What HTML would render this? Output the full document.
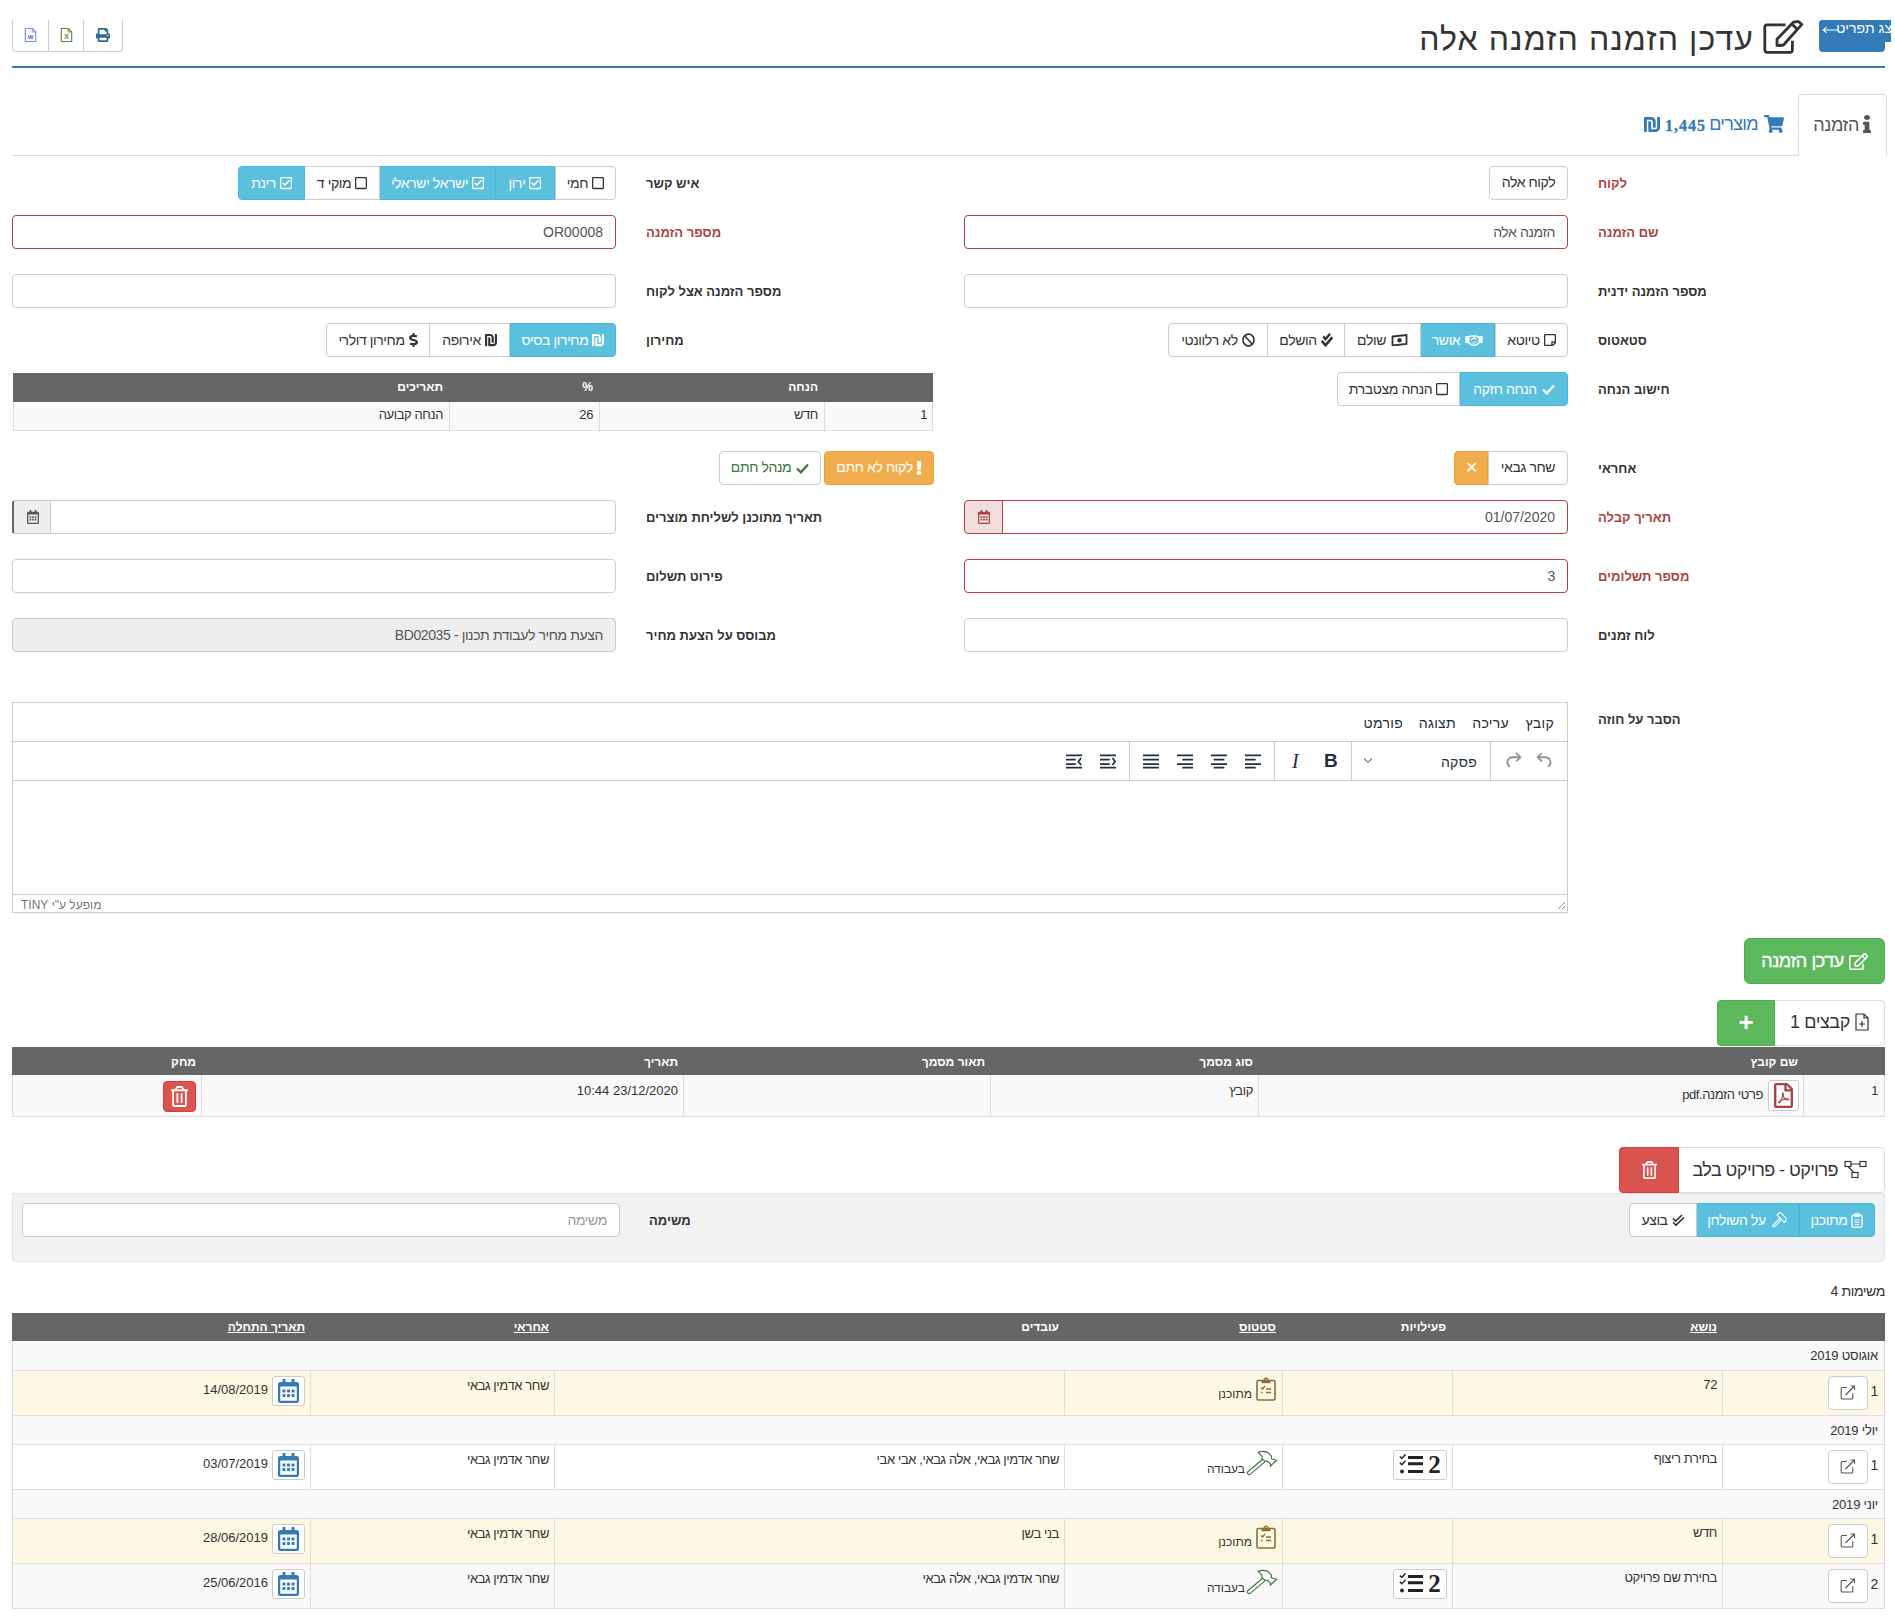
<!DOCTYPE html>
<html dir="rtl" lang="he">
<head>
<meta charset="utf-8">
<style>
*{box-sizing:border-box}
html,body{margin:0;padding:0;background:#fff}
body{width:1895px;height:1622px;overflow:hidden;position:relative;font-family:"Liberation Sans",sans-serif;font-size:14px;color:#333;line-height:1.42857;letter-spacing:-.4px}
.lt{letter-spacing:0}
.a{position:absolute}
.lbl{position:absolute;font-weight:bold;color:#333;text-align:left;white-space:nowrap;font-size:13px;line-height:18px;letter-spacing:0}
.err{color:#a94442}
.inp{position:absolute;height:34px;border:1px solid #ccc;border-radius:4px;background:#fff;color:#555;padding:2px 12px 0;display:flex;align-items:center;white-space:nowrap}
.inp.e{border-color:#a94442}
.inp.dis{background:#eee}
.grp{position:absolute;display:flex;height:34px}
.grp>div{height:100%;border:1px solid #ccc;background:#fff;color:#333;display:flex;align-items:center;justify-content:center;white-space:nowrap;margin-left:-1px;padding-top:2px}
.grp>div svg{margin-top:-2px}
.grp>div:first-child{border-radius:0 4px 4px 0;margin-left:0}
.grp>div:last-child{border-radius:4px 0 0 4px}
.grp>div.on{background:#5bc0de;border-color:#46b8da;color:#fff}
.grp svg{margin-left:4px;flex:none}
svg{display:block}
.th{color:#fff;font-weight:bold;white-space:nowrap;font-size:12px;line-height:18px;letter-spacing:0}
.td{color:#333;white-space:nowrap;font-size:13px}
.mnu{color:#222f3e;font-size:14px;white-space:nowrap;line-height:20px;letter-spacing:.3px}
</style>
</head>
<body>
<!-- HEADER -->
<div class="a" style="left:1819px;top:20px;width:72px;height:32px;overflow:hidden">
  <div class="a" style="left:0;top:0;width:66px;height:32px;background:#337ab7;border-radius:4px"></div>
  <div class="a" style="left:0;top:0;width:72px;height:22px;background:#337ab7;border-radius:4px 0 0 0"></div>
  <div class="a" style="right:-10px;top:-2px;color:#fff;font-size:14px;white-space:nowrap;line-height:20px;letter-spacing:0">הצג תפריט</div><svg class="a" style="left:3px;top:6px" width="16" height="8" viewBox="0 0 16 8"><path d="M16 4H1.5M4.5 1.2L1.3 4l3.2 2.8" fill="none" stroke="#fff" stroke-width="1.1"/></svg>
</div>
<svg class="a" style="left:1755px;top:15px" width="55" height="45" viewBox="0 0 55 45"><path d="M30.5 9.8H12.2a2.4 2.4 0 0 0-2.4 2.4V35a2.4 2.4 0 0 0 2.4 2.4H35a2.4 2.4 0 0 0 2.4-2.4V25.8" fill="none" stroke="#333" stroke-width="2.8"/><path d="M22 30.5V24.3L38.3 7.3Q39.5 6.6 43.8 6.7L46.7 9.6L28.4 30Q25 30.6 22 30.5Z" fill="none" stroke="#333" stroke-width="2.8" stroke-linejoin="round"/><path d="M37.4 9.6L42.6 14.8" stroke="#333" stroke-width="2.8"/></svg>
<div class="a" style="right:141px;top:23px;font-size:32px;line-height:32px;color:#333;white-space:nowrap;letter-spacing:1.1px">עדכן הזמנה הזמנה אלה</div>
<div class="a" style="left:12px;top:20px;width:111px;height:32px;border:1px solid #ccc;border-top:none;border-radius:0 0 4px 4px"></div>
<div class="a" style="left:48px;top:20px;width:1px;height:31px;background:#ccc"></div>
<div class="a" style="left:83px;top:20px;width:1px;height:31px;background:#ccc"></div>
<div class="a" style="left:24px;top:27px"><svg width="13" height="16" viewBox="0 0 15 18"><path d="M1.5 1.5h8l4 4v11h-12z" fill="none" stroke="#7b8cd6" stroke-width="1.3" stroke-linejoin="round"/><path d="M9.5 1.5v4h4" fill="none" stroke="#7b8cd6" stroke-width="1.1"/><text x="7.5" y="14" font-size="7" font-family="Liberation Sans" font-weight="bold" text-anchor="middle" fill="#4a60b5">W</text></svg></div>
<div class="a" style="left:60px;top:27px"><svg width="13" height="16" viewBox="0 0 15 18"><path d="M1.5 1.5h8l4 4v11h-12z" fill="none" stroke="#5a8a3c" stroke-width="1.3" stroke-linejoin="round"/><path d="M9.5 1.5v4h4" fill="none" stroke="#5a8a3c" stroke-width="1.1"/><text x="7.5" y="14" font-size="8" font-family="Liberation Sans" font-weight="bold" text-anchor="middle" fill="#5a8a3c">X</text></svg></div>
<div class="a" style="left:96px;top:28px"><svg width="14" height="14" viewBox="0 0 512 512" preserveAspectRatio="none" style=""><path d="M448 192V77.25c0-8.49-3.37-16.62-9.37-22.63L393.37 9.37c-6-6-14.14-9.37-22.63-9.370H96C78.33 0 64 14.33 64 32v160c-35.35 0-64 28.65-64 64v112c0 8.84 7.16 16 16 16h48v96c0 17.67 14.33 32 32 32h320c17.67 0 32-14.33 32-32v-96h48c8.84 0 16-7.16 16-16V256c0-35.35-28.65-64-64-64zm-64 256H128v-96h256v96zm0-224H128V64h192v48c0 8.84 7.16 16 16 16h48v96zm48 72c-13.25 0-24-10.75-24-24 0-13.26 10.75-24 24-24s24 10.740 24 24c0 13.25-10.75 24-24 24z" fill="#2e6a96"/></svg></div>
<div class="a" style="left:12px;top:66px;width:1873px;height:2px;background:#337ab7"></div>

<!-- TABS -->
<div class="a" style="left:12px;top:155px;width:1786px;height:1px;background:#ddd"></div>
<div class="a" style="left:1798px;top:94px;width:89px;height:62px;border:1px solid #ddd;border-bottom:none;border-radius:4px 4px 0 0;background:#fff"></div>
<div class="a" style="right:36px;top:116px;font-size:18px;line-height:18px;white-space:nowrap;color:#555">הזמנה</div>
<div class="a" style="left:1863px;top:115px"><svg width="8" height="18" viewBox="0 0 192 512" preserveAspectRatio="none" style=""><path d="M20 424.229h20V279.771H20c-11.046 0-20-8.954-20-20V212c0-11.046 8.954-20 20-20h112c11.046 0 20 8.954 20 20v212.229h20c11.046 0 20 8.954 20 20V492c0 11.046-8.954 20-20 20H20c-11.046 0-20-8.954-20-20v-47.771c0-11.046 8.954-20 20-20zM96 0C56.235 0 24 32.235 24 72s32.235 72 72 72 72-32.235 72-72S135.764 0 96 0z" fill="#555"/></svg></div>
<!-- TAB 2 -->
<div class="a" style="left:1764px;top:115px"><svg width="20" height="18" viewBox="0 0 576 512" preserveAspectRatio="none" style=""><path d="M528.12 301.319l47.273-208C578.806 78.301 567.391 64 551.99 64H159.208l-9.166-44.81C147.758 8.021 137.930 0 126.529 0H24C10.745 0 0 10.745 0 24v16c0 13.255 10.745 24 24 24h69.883l70.248 343.435C147.325 417.1 136 435.222 136 456c0 30.928 25.072 56 56 56s56-25.072 56-56c0-15.674-6.447-29.835-16.824-40h209.647C430.447 426.165 424 440.326 424 456c0 30.928 25.072 56 56 56s56-25.072 56-56c0-22.172-12.888-41.332-31.579-50.405l5.517-24.276c3.413-15.018-8.002-29.319-23.403-29.319H218.117l-6.545-32h293.145c11.206 0 20.920-7.754 23.403-18.681z" fill="#337ab7"/></svg></div>
<div class="a" style="right:137px;top:115px;font-size:18px;line-height:18px;white-space:nowrap;color:#337ab7;letter-spacing:-.7px">מוצרים</div>
<div class="a" style="left:1665px;top:118px;font-size:16px;line-height:16px;white-space:nowrap;color:#337ab7;font-family:'Liberation Serif';font-weight:bold;direction:ltr;letter-spacing:1px;-webkit-text-stroke:.3px #337ab7">1,445</div>
<div class="a" style="left:1644px;top:116px"><svg width="16" height="17" viewBox="0 0 448 512" preserveAspectRatio="none" style=""><path d="M248 168v168c0 8.84 7.16 16 16 16h48c8.84 0 16-7.16 16-16V168c0-75.11-60.89-136-136-136H24C10.75 32 0 42.74 0 56v408c0 8.84 7.16 16 16 16h48c8.84 0 16-7.16 16-16V112h112c30.93 0 56 25.07 56 56zM432 32h-48c-8.84 0-16 7.16-16 16v296c0 30.93-25.07 56-56 56H200V176c0-8.84-7.16-16-16-16h-48c-8.84 0-16 7.16-16 16v280c0 13.25 10.75 24 24 24h168c75.11 0 136-60.89 136-136V48c0-8.84-7.16-16-16-16z" fill="#337ab7"/></svg></div>

<!-- FORM ROW 1 -->
<div class="lbl err" style="left:1598px;top:175px">לקוח</div>
<div class="inp" style="left:1489px;top:166px;width:79px;color:#333;justify-content:center;padding:0">לקוח אלה</div>
<div class="lbl" style="left:646px;top:175px">איש קשר</div>
<div class="grp" style="left:237px;top:166px;width:379px">
 <div style="width:61px"><svg width="12" height="14" viewBox="0 0 448 512" preserveAspectRatio="none" style=""><path d="M400 32H48C21.5 32 0 53.5 0 80v352c0 26.5 21.5 48 48 48h352c26.5 0 48-21.5 48-48V80c0-26.5-21.5-48-48-48zm-6 400H54c-3.3 0-6-2.7-6-6V86c0-3.3 2.7-6 6-6h340c3.3 0 6 2.7 6 6v340c0 3.3-2.7 6-6 6z" fill="#333"/></svg>חמי</div>
 <div class="on" style="width:60px"><svg width="12" height="14" viewBox="0 0 448 512" preserveAspectRatio="none" style=""><path d="M400 32H48C21.49 32 0 53.49 0 80v352c0 26.51 21.49 48 48 48h352c26.51 0 48-21.49 48-48V80c0-26.51-21.49-48-48-48zm0 400H48V80h352v352zm-35.864-241.724L191.547 361.48c-4.705 4.667-12.303 4.637-16.970-.068l-90.781-91.516c-4.667-4.705-4.637-12.303.068-16.971l22.719-22.536c4.705-4.667 12.303-4.637 16.970.069l59.792 60.277 141.352-140.216c4.705-4.667 12.303-4.637 16.970.068l22.536 22.718c4.667 4.706 4.637 12.304-.068 16.971z" fill="#fff"/></svg>ירון</div>
 <div class="on" style="width:117px"><svg width="12" height="14" viewBox="0 0 448 512" preserveAspectRatio="none" style=""><path d="M400 32H48C21.49 32 0 53.49 0 80v352c0 26.51 21.49 48 48 48h352c26.51 0 48-21.49 48-48V80c0-26.51-21.49-48-48-48zm0 400H48V80h352v352zm-35.864-241.724L191.547 361.48c-4.705 4.667-12.303 4.637-16.970-.068l-90.781-91.516c-4.667-4.705-4.637-12.303.068-16.971l22.719-22.536c4.705-4.667 12.303-4.637 16.970.069l59.792 60.277 141.352-140.216c4.705-4.667 12.303-4.637 16.970.068l22.536 22.718c4.667 4.706 4.637 12.304-.068 16.971z" fill="#fff"/></svg>ישראל ישראלי</div>
 <div style="width:76px"><svg width="12" height="14" viewBox="0 0 448 512" preserveAspectRatio="none" style=""><path d="M400 32H48C21.5 32 0 53.5 0 80v352c0 26.5 21.5 48 48 48h352c26.5 0 48-21.5 48-48V80c0-26.5-21.5-48-48-48zm-6 400H54c-3.3 0-6-2.7-6-6V86c0-3.3 2.7-6 6-6h340c3.3 0 6 2.7 6 6v340c0 3.3-2.7 6-6 6z" fill="#333"/></svg>מוקי ד</div>
 <div class="on" style="width:67px"><svg width="12" height="14" viewBox="0 0 448 512" preserveAspectRatio="none" style=""><path d="M400 32H48C21.49 32 0 53.49 0 80v352c0 26.51 21.49 48 48 48h352c26.51 0 48-21.49 48-48V80c0-26.51-21.49-48-48-48zm0 400H48V80h352v352zm-35.864-241.724L191.547 361.48c-4.705 4.667-12.303 4.637-16.970-.068l-90.781-91.516c-4.667-4.705-4.637-12.303.068-16.971l22.719-22.536c4.705-4.667 12.303-4.637 16.970.069l59.792 60.277 141.352-140.216c4.705-4.667 12.303-4.637 16.970.068l22.536 22.718c4.667 4.706 4.637 12.304-.068 16.971z" fill="#fff"/></svg>רינת</div>
</div>

<!-- ROW 2 -->
<div class="lbl err" style="left:1598px;top:224px">שם הזמנה</div>
<div class="inp e" style="left:964px;top:215px;width:604px">הזמנה אלה</div>
<div class="lbl err" style="left:646px;top:224px">מספר הזמנה</div>
<div class="inp e lt" style="left:12px;top:215px;width:604px">OR00008</div>

<!-- ROW 3 -->
<div class="lbl" style="left:1598px;top:283px">מספר הזמנה ידנית</div>
<div class="inp" style="left:964px;top:274px;width:604px"></div>
<div class="lbl" style="left:646px;top:283px">מספר הזמנה אצל לקוח</div>
<div class="inp" style="left:12px;top:274px;width:604px"></div>

<!-- ROW 4 -->
<div class="lbl" style="left:1598px;top:332px">סטאטוס</div>
<div class="grp" style="left:1169px;top:323px;width:399px">
 <div style="width:73px"><svg width="12" height="14" viewBox="0 0 448 512" preserveAspectRatio="none" style=""><path d="M448 348.106V80c0-26.51-21.49-48-48-48H48C21.490 32 0 53.490 0 80v351.988c0 26.51 21.49 48 48 48h268.118a48 48 0 0 0 33.941-14.059l83.882-83.882A48 48 0 0 0 448 348.106zm-128 80v-76.118h76.118L320 428.106zM400 80v223.988H296c-13.255 0-24 10.745-24 24v104H48V80h352z" fill="#333"/></svg>טיוטא</div>
 <div class="on" style="width:75px"><svg width="18" height="11" viewBox="0 0 18 11" style="margin-left:5px"><path d="M0.3 1h3.4v7H0.3zM14.3 1h3.4v7h-3.4z" fill="#fff"/><path d="M3.7 1.8L6.8 1h3.4l4.1 1.2V7.6l-3.8 2.8H7.4L3.7 7.6z" fill="none" stroke="#fff" stroke-width="1.6" stroke-linejoin="round"/><path d="M6 5l3-2.2 2.3 1.6M7.5 7.5l1.5 1.2M9.5 6.5l1.3 1" fill="none" stroke="#fff" stroke-width="1.2"/></svg>אושר</div>
 <div style="width:77px"><svg width="17" height="12" viewBox="0 0 17 12" style="margin-left:5px"><path d="M1.5 2.5L15.5 1v9L1.5 11.5z" fill="none" stroke="#333" stroke-width="1.8"/><circle cx="8.5" cy="6.2" r="2.2" fill="#333"/></svg>שולם</div>
 <div style="width:78px"><svg width="12" height="14" viewBox="0 0 512 512" preserveAspectRatio="none" style=""><path d="M505 174.8l-39.6-39.6c-9.4-9.4-24.6-9.4-33.9 0L192 374.7 80.6 263.2c-9.4-9.4-24.6-9.4-33.9 0L7 302.9c-9.4 9.4-9.4 24.6 0 34L175 505c9.4 9.4 24.6 9.4 33.9 0l296-296.2c9.4-9.5 9.4-24.7.1-34zm-324.3 106c6.2 6.3 16.4 6.3 22.6 0l208-208.2c6.2-6.3 6.2-16.4 0-22.6L366.1 4.7c-6.2-6.3-16.4-6.3-22.6 0L192 156.2l-55.4-55.5c-6.2-6.3-16.4-6.3-22.6 0L68.7 146c-6.2 6.3-6.2 16.4 0 22.6l112 112.2z" fill="#333"/></svg>הושלם</div>
 <div style="width:100px"><svg width="13" height="14" viewBox="0 0 512 512" preserveAspectRatio="none" style=""><path d="M256 8C119.034 8 8 119.033 8 256s111.034 248 248 248 248-111.034 248-248S392.967 8 256 8zm130.108 117.892c65.448 65.448 70 165.481 20.677 235.637L150.47 105.216c70.204-49.356 170.226-44.735 235.638 20.676zM125.892 386.108c-65.448-65.448-70-165.481-20.677-235.637L361.53 406.784c-70.203 49.356-170.226 44.736-235.638-20.676z" fill="#333"/></svg>לא רלוונטי</div>
</div>
<div class="lbl" style="left:646px;top:332px">מחירון</div>
<div class="grp" style="left:327px;top:323px;width:289px">
 <div class="on" style="width:106px"><svg width="12" height="14" viewBox="0 0 448 512" preserveAspectRatio="none" style=""><path d="M248 168v168c0 8.84 7.16 16 16 16h48c8.84 0 16-7.16 16-16V168c0-75.11-60.89-136-136-136H24C10.75 32 0 42.74 0 56v408c0 8.84 7.16 16 16 16h48c8.84 0 16-7.16 16-16V112h112c30.93 0 56 25.07 56 56zM432 32h-48c-8.84 0-16 7.16-16 16v296c0 30.93-25.07 56-56 56H200V176c0-8.84-7.16-16-16-16h-48c-8.84 0-16 7.16-16 16v280c0 13.25 10.75 24 24 24h168c75.11 0 136-60.89 136-136V48c0-8.84-7.16-16-16-16z" fill="#fff"/></svg>מחירון בסיס</div>
 <div style="width:81px"><svg width="12" height="14" viewBox="0 0 448 512" preserveAspectRatio="none" style=""><path d="M248 168v168c0 8.84 7.16 16 16 16h48c8.84 0 16-7.16 16-16V168c0-75.11-60.89-136-136-136H24C10.75 32 0 42.74 0 56v408c0 8.84 7.16 16 16 16h48c8.84 0 16-7.16 16-16V112h112c30.93 0 56 25.07 56 56zM432 32h-48c-8.84 0-16 7.16-16 16v296c0 30.93-25.07 56-56 56H200V176c0-8.84-7.16-16-16-16h-48c-8.84 0-16 7.16-16 16v280c0 13.25 10.75 24 24 24h168c75.11 0 136-60.89 136-136V48c0-8.84-7.16-16-16-16z" fill="#333"/></svg>אירופה</div>
 <div style="width:104px"><svg width="9" height="14" viewBox="0 0 288 512" preserveAspectRatio="none" style=""><path d="M209.2 233.4l-108-31.6C88.7 198.2 80 186.5 80 173.5c0-16.3 13.2-29.5 29.5-29.5h66.3c12.2 0 24.2 3.7 34.2 10.5 6.1 4.1 14.3 3.1 19.5-2l34.8-34c7.1-6.9 6.1-18.4-1.8-24.5C238 74.8 207.4 64.1 176 64V16c0-8.8-7.2-16-16-16h-32c-8.8 0-16 7.2-16 16v48h-2.5C45.8 64-5.4 118.7.5 183.6c4.2 46.1 39.4 83.6 83.8 96.6l102.5 30c12.5 3.7 21.2 15.3 21.2 28.3 0 16.3-13.2 29.5-29.5 29.5h-66.3C100 368 88 364.3 78 357.5c-6.1-4.1-14.300-3.1-19.5 2l-34.8 34c-7.1 6.9-6.1 18.4 1.8 24.5 24.5 19.2 55.1 29.9 86.5 30v48c0 8.8 7.2 16 16 16h32c8.8 0 16-7.2 16-16v-48.2c46.6-.9 90.3-28.6 105.7-72.7 21.5-61.6-14.6-124.8-72.5-141.7z" fill="#333"/></svg>מחירון דולרי</div>
</div>

<!-- ROW 5 -->
<div class="lbl" style="left:1598px;top:381px">חישוב הנחה</div>
<div class="grp" style="left:1338px;top:372px;width:230px">
 <div class="on" style="width:108px"><svg width="13" height="11" viewBox="0 0 13 11" style="margin-left:5px"><path d="M1 5.5l3.8 3.8L12 1.5" fill="none" stroke="#fff" stroke-width="2.2"/></svg>הנחה חזקה</div>
 <div style="width:123px"><svg width="12" height="14" viewBox="0 0 448 512" preserveAspectRatio="none" style=""><path d="M400 32H48C21.5 32 0 53.5 0 80v352c0 26.5 21.5 48 48 48h352c26.5 0 48-21.5 48-48V80c0-26.5-21.5-48-48-48zm-6 400H54c-3.3 0-6-2.7-6-6V86c0-3.3 2.7-6 6-6h340c3.3 0 6 2.7 6 6v340c0 3.3-2.7 6-6 6z" fill="#333"/></svg>הנחה מצטברת</div>
</div>
<div class="a" style="left:13px;top:373px;width:920px;height:58px;border:1px solid #ddd;background:#f9f9f9">
 <div class="a" style="left:-1px;top:-1px;width:920px;height:29px;background:#666"></div>
 <div class="a" style="left:435px;top:28px;width:1px;height:30px;background:#ddd"></div>
 <div class="a" style="left:585px;top:28px;width:1px;height:30px;background:#ddd"></div>
 <div class="a" style="left:810px;top:28px;width:1px;height:30px;background:#ddd"></div>
 <div class="a th" style="right:114px;top:4px">הנחה</div>
 <div class="a th" style="right:339px;top:4px">%</div>
 <div class="a th" style="right:489px;top:4px">תאריכים</div>
 <div class="a td" style="right:5px;top:32px">1</div>
 <div class="a td" style="right:114px;top:32px">חדש</div>
 <div class="a td" style="right:339px;top:32px">26</div>
 <div class="a td" style="right:489px;top:32px">הנחה קבועה</div>
</div>

<!-- ROW 6 -->
<div class="lbl" style="left:1598px;top:460px">אחראי</div>
<div class="a" style="left:1454px;top:451px;width:114px;height:34px;display:flex">
 <div style="width:80px;height:34px;border:1px solid #ccc;border-radius:0 4px 4px 0;display:flex;align-items:center;justify-content:center">שחר גבאי</div>
 <div style="width:34px;height:34px;background:#f0ad4e;border:1px solid #eea236;border-radius:4px 0 0 4px;color:#fff;display:flex;align-items:center;justify-content:center;font-size:16px">✕</div>
</div>
<div class="a" style="left:824px;top:451px;width:110px;height:34px;background:#f0ad4e;border:1px solid #eea236;border-radius:4px;color:#fff;display:flex;align-items:center;justify-content:center;white-space:nowrap"><svg width="6" height="14" viewBox="0 0 192 512" preserveAspectRatio="none" style="margin-left:3px"><path d="M176 432c0 44.112-35.888 80-80 80s-80-35.888-80-80 35.888-80 80-80 80 35.888 80 80zM25.26 25.199l13.6 272C39.499 309.972 50.041 320 62.83 320h66.34c12.789 0 23.331-10.028 23.970-22.801l13.6-272C167.425 11.490 156.496 0 142.77 0H49.23C35.504 0 24.575 11.49 25.26 25.199z" fill="#fff"/></svg>לקוח לא חתם</div>
<div class="a" style="left:719px;top:451px;width:102px;height:34px;background:#fff;border:1px solid #ccc;border-radius:4px;color:#3c763d;display:flex;align-items:center;justify-content:center;white-space:nowrap"><svg width="13" height="11" viewBox="0 0 13 11" style="margin-left:5px"><path d="M1 5.5l3.8 3.8L12 1.5" fill="none" stroke="#3c763d" stroke-width="2.2"/></svg>מנהל חתם</div>

<!-- ROW 7 -->
<div class="lbl err" style="left:1598px;top:509px">תאריך קבלה</div>
<div class="inp e lt" style="left:1002px;top:500px;width:566px;border-radius:0 4px 4px 0">01/07/2020</div>
<div class="a" style="left:964px;top:500px;width:39px;height:34px;background:#f2dede;border:1px solid #a94442;border-radius:4px 0 0 4px;display:flex;align-items:center;justify-content:center"><svg width="12" height="14" viewBox="0 0 448 512" preserveAspectRatio="none" style=""><path d="M148 288h-40c-6.6 0-12-5.4-12-12v-40c0-6.6 5.4-12 12-12h40c6.6 0 12 5.4 12 12v40c0 6.6-5.4 12-12 12zm108-12v-40c0-6.6-5.4-12-12-12h-40c-6.6 0-12 5.4-12 12v40c0 6.6 5.4 12 12 12h40c6.6 0 12-5.4 12-12zm96 0v-40c0-6.6-5.4-12-12-12h-40c-6.6 0-12 5.4-12 12v40c0 6.6 5.4 12 12 12h40c6.6 0 12-5.4 12-12zm-96 96v-40c0-6.6-5.4-12-12-12h-40c-6.6 0-12 5.4-12 12v40c0 6.6 5.4 12 12 12h40c6.6 0 12-5.4 12-12zm-96 0v-40c0-6.6-5.4-12-12-12h-40c-6.6 0-12 5.4-12 12v40c0 6.6 5.4 12 12 12h40c6.6 0 12-5.4 12-12zm192 0v-40c0-6.6-5.4-12-12-12h-40c-6.6 0-12 5.4-12 12v40c0 6.6 5.4 12 12 12h40c6.6 0 12-5.4 12-12zm96-260v352c0 26.5-21.5 48-48 48H48c-26.5 0-48-21.5-48-48V112c0-26.5 21.5-48 48-48h48V12c0-6.6 5.4-12 12-12h40c6.6 0 12 5.4 12 12v52h128V12c0-6.6 5.4-12 12-12h40c6.6 0 12 5.4 12 12v52h48c26.5 0 48 21.5 48 48zm-48 346V160H48v298c0 3.3 2.7 6 6 6h340c3.3 0 6-2.7 6-6z" fill="#a94442"/></svg></div>
<div class="lbl" style="left:646px;top:509px">תאריך מתוכנן לשליחת מוצרים</div>
<div class="inp" style="left:50px;top:500px;width:566px;border-radius:0 4px 4px 0"></div>
<div class="a" style="left:12px;top:500px;width:39px;height:34px;background:#eee;border:1px solid #ccc;border-left:2px solid #666;border-radius:3px 0 0 3px;padding-left:1px;display:flex;align-items:center;justify-content:center"><svg width="12" height="14" viewBox="0 0 448 512" preserveAspectRatio="none" style=""><path d="M148 288h-40c-6.6 0-12-5.4-12-12v-40c0-6.6 5.4-12 12-12h40c6.6 0 12 5.4 12 12v40c0 6.6-5.4 12-12 12zm108-12v-40c0-6.6-5.4-12-12-12h-40c-6.6 0-12 5.4-12 12v40c0 6.6 5.4 12 12 12h40c6.6 0 12-5.4 12-12zm96 0v-40c0-6.6-5.4-12-12-12h-40c-6.6 0-12 5.4-12 12v40c0 6.6 5.4 12 12 12h40c6.6 0 12-5.4 12-12zm-96 96v-40c0-6.6-5.4-12-12-12h-40c-6.6 0-12 5.4-12 12v40c0 6.6 5.4 12 12 12h40c6.6 0 12-5.4 12-12zm-96 0v-40c0-6.6-5.4-12-12-12h-40c-6.6 0-12 5.4-12 12v40c0 6.6 5.4 12 12 12h40c6.6 0 12-5.4 12-12zm192 0v-40c0-6.6-5.4-12-12-12h-40c-6.6 0-12 5.4-12 12v40c0 6.6 5.4 12 12 12h40c6.6 0 12-5.4 12-12zm96-260v352c0 26.5-21.5 48-48 48H48c-26.5 0-48-21.5-48-48V112c0-26.5 21.5-48 48-48h48V12c0-6.6 5.4-12 12-12h40c6.6 0 12 5.4 12 12v52h128V12c0-6.6 5.4-12 12-12h40c6.6 0 12 5.4 12 12v52h48c26.5 0 48 21.5 48 48zm-48 346V160H48v298c0 3.3 2.7 6 6 6h340c3.3 0 6-2.7 6-6z" fill="#555"/></svg></div>

<!-- ROW 8 -->
<div class="lbl err" style="left:1598px;top:568px">מספר תשלומים</div>
<div class="inp e" style="left:964px;top:559px;width:604px">3</div>
<div class="lbl" style="left:646px;top:568px">פירוט תשלום</div>
<div class="inp" style="left:12px;top:559px;width:604px"></div>

<!-- ROW 9 -->
<div class="lbl" style="left:1598px;top:627px">לוח זמנים</div>
<div class="inp" style="left:964px;top:618px;width:604px"></div>
<div class="lbl" style="left:646px;top:627px">מבוסס על הצעת מחיר</div>
<div class="inp dis" style="left:12px;top:618px;width:604px">הצעת מחיר לעבודת תכנון - BD02035</div>


<!-- EDITOR -->
<div class="lbl" style="left:1598px;top:711px">הסבר על חוזה</div>
<div class="a" style="left:12px;top:702px;width:1556px;height:211px;border:1px solid #ccc;background:#fff">
 <div class="a" style="left:0;top:38px;width:1554px;height:1px;background:#ccc"></div>
 <div class="a" style="left:0;top:77px;width:1554px;height:1px;background:#ccc"></div>
 <div class="a" style="left:0;top:191px;width:1554px;height:1px;background:#ccc"></div>
 <div class="a mnu" style="right:13px;top:10px">קובץ</div>
 <div class="a mnu" style="right:58px;top:10px">עריכה</div>
 <div class="a mnu" style="right:111px;top:10px">תצוגה</div>
 <div class="a mnu" style="right:164px;top:10px">פורמט</div>
 <!-- toolbar -->
 <svg class="a" style="left:1521px;top:46px" width="22" height="22" viewBox="0 0 24 24"><path d="M6.4 8H12c3.7 0 6.2 2 6.8 5.1.6 2.7-.4 5.6-2.4 6.6a1 1 0 1 1-1-1.8c1.1-.6 1.8-2.7 1.4-4.6-.5-2.1-2.1-3.3-4.8-3.3H6.4l2.3 2.3a1 1 0 1 1-1.4 1.4l-4-4a1 1 0 0 1 0-1.4l4-4a1 1 0 0 1 1.4 1.4L6.4 8z" fill="#8d949b"/></svg>
 <svg class="a" style="left:1489px;top:46px" width="22" height="22" viewBox="0 0 24 24"><path d="M17.6 10H12c-2.8 0-4.4 1.2-4.9 3.3-.4 2 .3 4 1.4 4.6a1 1 0 1 1-1 1.8c-2-1-3-3.9-2.4-6.6.6-3 3.2-5.1 6.9-5.1h5.6l-2.3-2.3a1 1 0 1 1 1.4-1.4l4 4c.4.4.4 1 0 1.4l-4 4a1 1 0 0 1-1.4-1.4l2.3-2.3z" fill="#8d949b"/></svg>
 <div class="a" style="left:1477px;top:39px;width:1px;height:38px;background:#ccc"></div>
 <div class="a mnu" style="right:90px;top:49px">פסקה</div>
 <svg class="a" style="left:1350px;top:54px" width="10" height="7" viewBox="0 0 10 6"><path d="M1 1l4 4 4-4" fill="none" stroke="#222f3e" stroke-width="1.2" opacity=".6"/></svg>
 <div class="a" style="left:1338px;top:39px;width:1px;height:38px;background:#ccc"></div>
 <div class="a" style="left:1311px;top:47px;font-weight:bold;font-size:19px;color:#222f3e;line-height:22px">B</div>
 <div class="a" style="left:1279px;top:47px;font-style:italic;font-size:20px;color:#222f3e;line-height:22px;font-family:'Liberation Serif'">I</div>
 <div class="a" style="left:1261px;top:39px;width:1px;height:38px;background:#ccc"></div>
 <svg class="a" style="left:1232px;top:51px" width="16" height="15" viewBox="0 0 18 16"><path d="M0 1h18M0 6h12M0 11h18M0 15h12" stroke="#222f3e" stroke-width="2"/></svg>
 <svg class="a" style="left:1198px;top:51px" width="16" height="15" viewBox="0 0 18 16"><path d="M0 1h18M3 6h12M0 11h18M3 15h12" stroke="#222f3e" stroke-width="2"/></svg>
 <svg class="a" style="left:1164px;top:51px" width="16" height="15" viewBox="0 0 18 16"><path d="M0 1h18M6 6h12M0 11h18M6 15h12" stroke="#222f3e" stroke-width="2"/></svg>
 <svg class="a" style="left:1130px;top:51px" width="16" height="15" viewBox="0 0 18 16"><path d="M0 1h18M0 6h18M0 11h18M0 15h18" stroke="#222f3e" stroke-width="2"/></svg>
 <div class="a" style="left:1116px;top:39px;width:1px;height:38px;background:#ccc"></div>
 <svg class="a" style="left:1087px;top:51px" width="16" height="15" viewBox="0 0 18 16"><path d="M0 1h18M0 6h11M0 11h11M0 15h18M14 4l3 4-3 4" stroke="#222f3e" stroke-width="2" fill="none"/></svg>
 <svg class="a" style="left:1053px;top:51px" width="16" height="15" viewBox="0 0 18 16"><path d="M0 1h18M0 6h11M0 11h11M0 15h18M17 4l-3 4 3 4" stroke="#222f3e" stroke-width="2" fill="none"/></svg>
 <div class="a" style="left:8px;top:194px;font-size:12px;color:rgba(34,47,62,.7);line-height:16px;white-space:nowrap;letter-spacing:0">מופעל ע"י TINY</div>
 <svg class="a" style="left:1544px;top:198px" width="9" height="9" viewBox="0 0 9 9"><path d="M8 1L1 8M8 5L5 8" stroke="#888" stroke-width="1"/></svg>
</div>

<!-- UPDATE BUTTON -->
<div class="a" style="left:1744px;top:938px;width:141px;height:46px;background:#5cb85c;border:1px solid #4cae4c;border-radius:6px;color:#fff;font-size:18px;display:flex;align-items:center;justify-content:center;white-space:nowrap;padding-top:2px;-webkit-text-stroke:.35px #fff"><svg width="19" height="17" viewBox="0 0 576 512" preserveAspectRatio="none" style="margin-left:5px;margin-top:-2px"><path d="M402.3 344.9l32-32c5-5 13.7-1.5 13.7 5.7V464c0 26.5-21.5 48-48 48H48c-26.5 0-48-21.5-48-48V112c0-26.5 21.5-48 48-48h273.5c7.1 0 10.7 8.6 5.7 13.7l-32 32c-1.5 1.5-3.5 2.3-5.7 2.3H48v352h352V350.5c0-2.1.8-4.1 2.3-5.6zm156.6-201.8L296.3 405.7l-90.4 10c-26.2 2.9-48.5-19.2-45.6-45.6l10-90.4L432.9 17.1c22.9-22.9 59.9-22.9 82.7 0l43.2 43.2c22.9 22.9 22.9 60 .1 82.8zM460.1 174L402 115.9 216.2 301.8l-7.3 65.3 65.3-7.3L460.1 174zm64.8-79.7l-43.2-43.2c-4.1-4.1-10.8-4.1-14.8 0L436 82l58.1 58.1 30.9-30.9c4-4.2 4-10.8-.1-14.9z" fill="#fff"/></svg>עדכן הזמנה</div>

<!-- FILES -->
<div class="a" style="left:1717px;top:1000px;width:168px;height:46px;border:1px solid #ddd;border-radius:4px;background:#fff"></div>
<div class="a" style="left:1717px;top:1000px;width:58px;height:46px;background:#5cb85c;border:1px solid #4cae4c;border-radius:4px 0 0 4px;color:#fff;font-size:26px;font-weight:bold;display:flex;align-items:center;justify-content:center">+</div>
<div class="a" style="left:1790px;top:1010px;font-size:18px;line-height:24px;white-space:nowrap;display:flex;align-items:center">
<svg width="14" height="18" viewBox="0 0 14 18" style="margin-left:5px"><path d="M1 1h8l4 4v12H1z" fill="none" stroke="#333" stroke-width="1.2"/><path d="M9 1v4h4" fill="none" stroke="#333" stroke-width="1.2"/><path d="M7 8v6M4 11h6" stroke="#333" stroke-width="1.2"/></svg>קבצים 1</div>

<div class="a" style="left:12px;top:1047px;width:1873px;height:70px;border:1px solid #ddd;background:#f9f9f9">
 <div class="a" style="left:-1px;top:-1px;width:1873px;height:28px;background:#666"></div>
 <div class="a" style="left:188px;top:27px;width:1px;height:42px;background:#ddd"></div>
 <div class="a" style="left:670px;top:27px;width:1px;height:42px;background:#ddd"></div>
 <div class="a" style="left:977px;top:27px;width:1px;height:42px;background:#ddd"></div>
 <div class="a" style="left:1245px;top:27px;width:1px;height:42px;background:#ddd"></div>
 <div class="a" style="left:1790px;top:27px;width:1px;height:42px;background:#ddd"></div>
 <div class="a th" style="right:86px;top:5px">שם קובץ</div>
 <div class="a th" style="right:631px;top:5px">סוג מסמך</div>
 <div class="a th" style="right:899px;top:5px">תאור מסמך</div>
 <div class="a th" style="right:1206px;top:5px">תאריך</div>
 <div class="a th" style="right:1688px;top:5px">מחק</div>
 <div class="a td" style="right:6px;top:34px">1</div>
 <div class="a" style="left:1755px;top:32px;width:31px;height:31px;border:1px solid #ccc;border-radius:3px;background:#fff;display:flex;align-items:center;justify-content:center"><svg width="19" height="25" viewBox="0 0 384 512" preserveAspectRatio="none" style=""><path d="M369.9 97.9L286 14C277 5 264.8-.1 252.1-.1H48C21.5 0 0 21.5 0 48v416c0 26.5 21.5 48 48 48h288c26.5 0 48-21.5 48-48V131.9c0-12.7-5.1-25-14.1-34zM332.1 128H256V51.9l76.1 76.1zM48 464V48h160v104c0 13.3 10.7 24 24 24h104v288H48zm250.2-143.7c-12.2-12-47-8.7-64.4-6.5-17.2-10.5-28.7-25-36.8-46.3 3.9-16.1 10.1-40.6 5.4-56-4.2-26.2-37.8-23.6-42.6-5.9-4.4 16.1-.4 38.5 7 67.1-10 23.9-24.9 56-35.4 74.4-20 10.3-47 26.2-51 46.2-3.3 15.8 26 55.2 76.1-31.2 22.4-7.4 46.8-16.5 68.4-20.1 18.9 10.2 41 17 55.8 17 25.5 0 28-28.2 17.5-38.7zm-198.1 77.8c5.1-13.7 24.5-29.5 30.4-35-19 30.3-30.4 35.7-30.4 35zm81.6-190.6c7.4 0 6.7 32.1 1.8 40.8-4.4-13.9-4.3-40.8-1.8-40.8zm-24.4 136.6c9.7-16.9 18-37 24.7-54.7 8.3 15.1 18.9 27.2 30.1 35.5-20.8 4.3-38.9 13.1-54.8 19.2zm175.4-6.7s-6.7 8-49.9-10.4c46.9-3.5 54.6 7.2 49.9 10.4z" fill="#a94442"/></svg></div>
 <div class="a td" style="right:121px;top:38px">פרטי הזמנה.pdf</div>
 <div class="a td" style="right:631px;top:34px">קובץ</div>
 <div class="a td" style="right:1206px;top:34px;direction:ltr;letter-spacing:0">10:44 23/12/2020</div>
 <div class="a" style="left:150px;top:33px;width:33px;height:31px;background:#d9534f;border:1px solid #d43f3a;border-radius:4px;display:flex;align-items:center;justify-content:center"><svg width="17" height="21" viewBox="0 0 448 512" preserveAspectRatio="none" style=""><path d="M268 416h24a12 12 0 0 0 12-12V188a12 12 0 0 0-12-12h-24a12 12 0 0 0-12 12v216a12 12 0 0 0 12 12zM432 80h-82.41l-34-56.7A48 48 0 0 0 274.41 0H173.59a48 48 0 0 0-41.16 23.3L98.41 80H16A16 16 0 0 0 0 96v16a16 16 0 0 0 16 16h16v336a48 48 0 0 0 48 48h288a48 48 0 0 0 48-48V128h16a16 16 0 0 0 16-16V96a16 16 0 0 0-16-16zM171.84 50.91A6 6 0 0 1 177 48h94a6 6 0 0 1 5.15 2.91L293.61 80H154.39zM368 464H80V128h288zm-212-48h24a12 12 0 0 0 12-12V188a12 12 0 0 0-12-12h-24a12 12 0 0 0-12 12v216a12 12 0 0 0 12 12z" fill="#fff"/></svg></div>
</div>

<!-- PROJECT -->
<div class="a" style="left:1619px;top:1147px;width:266px;height:46px;border:1px solid #ddd;border-radius:4px;background:#fff"></div>
<div class="a" style="left:1619px;top:1147px;width:60px;height:46px;background:#d9534f;border:1px solid #d43f3a;border-radius:4px 0 0 4px;display:flex;align-items:center;justify-content:center"><svg width="15" height="18" viewBox="0 0 448 512" preserveAspectRatio="none" style=""><path d="M268 416h24a12 12 0 0 0 12-12V188a12 12 0 0 0-12-12h-24a12 12 0 0 0-12 12v216a12 12 0 0 0 12 12zM432 80h-82.41l-34-56.7A48 48 0 0 0 274.41 0H173.59a48 48 0 0 0-41.16 23.3L98.41 80H16A16 16 0 0 0 0 96v16a16 16 0 0 0 16 16h16v336a48 48 0 0 0 48 48h288a48 48 0 0 0 48-48V128h16a16 16 0 0 0 16-16V96a16 16 0 0 0-16-16zM171.84 50.91A6 6 0 0 1 177 48h94a6 6 0 0 1 5.15 2.91L293.61 80H154.39zM368 464H80V128h288zm-212-48h24a12 12 0 0 0 12-12V188a12 12 0 0 0-12-12h-24a12 12 0 0 0-12 12v216a12 12 0 0 0 12 12z" fill="#fff"/></svg></div>
<div class="a" style="right:28px;top:1158px;font-size:18px;line-height:24px;white-space:nowrap;display:flex;align-items:center;letter-spacing:-.55px">
<svg width="23" height="19" viewBox="0 0 23 18" style="margin-left:6px;margin-top:-2px"><rect x="1" y="1" width="6" height="5" fill="none" stroke="#333" stroke-width="1.2"/><rect x="16" y="1" width="6" height="5" fill="none" stroke="#333" stroke-width="1.2"/><rect x="8" y="12" width="6" height="5" fill="none" stroke="#333" stroke-width="1.2"/><path d="M7 3.5h9M4 6l6 6" stroke="#333" stroke-width="1.2"/></svg>פרויקט - פרויקט בלב</div>

<div class="a" style="left:12px;top:1193px;width:1873px;height:69px;border:1px solid #e3e3e3;background:#f2f2f2;border-radius:0 0 4px 4px"></div>
<div class="grp" style="left:1630px;top:1203px;width:245px">
 <div class="on" style="width:76px"><svg width="12" height="15" viewBox="0 0 12 15" style="margin-left:4px"><rect x="1" y="2.2" width="10" height="12" rx="1.3" fill="none" stroke="#fff" stroke-width="1.3"/><rect x="3.5" y="0.8" width="5" height="2.6" rx=".6" fill="none" stroke="#fff" stroke-width="1.1"/><path d="M3.5 7h5M3.5 9.3h5M3.5 11.6h5" stroke="#fff" stroke-width="1"/></svg>מתוכנן</div>
 <div class="on" style="width:103px"><svg width="17" height="16" viewBox="0 0 16 16" style="margin-left:5px"><g transform="rotate(45 8 8)"><rect x="6.9" y="6.5" width="2.2" height="10.5" rx="1.1" fill="none" stroke="#fff" stroke-width="1.1"/><path d="M2.8 2h8.2l2.2 2.2v2.1H2.8z" fill="none" stroke="#fff" stroke-width="1.1" stroke-linejoin="round"/></g></svg>על השולחן</div>
 <div style="width:68px"><svg width="13" height="12" viewBox="0 0 13 12" style="margin-left:4px"><path d="M1 4.5l2.6 2.6L10 1M1 8.2l3 3L12 3.5" fill="none" stroke="#333" stroke-width="1.6"/></svg>בוצע</div>
</div>
<div class="lbl" style="left:649px;top:1212px">משימה</div>
<div class="inp" style="left:22px;top:1203px;width:598px;height:34px;color:#999">משימה</div>
<div class="a" style="right:10px;top:1282px;white-space:nowrap;color:#333">משימות 4</div>

<!-- TASKS -->
<div class="a" style="left:12px;top:1313px;width:1873px;height:28px;background:#666"></div>
<div class="a th" style="right:178px;top:1318px;text-decoration:underline">נושא</div>
<div class="a th" style="right:449px;top:1318px;">פעילויות</div>
<div class="a th" style="right:619px;top:1318px;text-decoration:underline">סטטוס</div>
<div class="a th" style="right:836px;top:1318px;">עובדים</div>
<div class="a th" style="right:1346px;top:1318px;text-decoration:underline">אחראי</div>
<div class="a th" style="right:1590px;top:1318px;text-decoration:underline">תאריך התחלה</div>
<div class="a" style="left:12px;top:1341px;width:1873px;height:30px;background:#f9f9f9;border:1px solid #ddd;border-top:none"></div>
<div class="a td" style="right:17px;top:1347px;font-size:13px;letter-spacing:-.2px">אוגוסט 2019</div>
<div class="a" style="left:12px;top:1371px;width:1873px;height:45px;background:#fcf8e3;border:1px solid #ddd;border-top:none"></div>
<div class="a" style="left:310px;top:1371px;width:1px;height:45px;background:#ddd"></div>
<div class="a" style="left:554px;top:1371px;width:1px;height:45px;background:#ddd"></div>
<div class="a" style="left:1064px;top:1371px;width:1px;height:45px;background:#ddd"></div>
<div class="a" style="left:1282px;top:1371px;width:1px;height:45px;background:#ddd"></div>
<div class="a" style="left:1452px;top:1371px;width:1px;height:45px;background:#ddd"></div>
<div class="a" style="left:1722px;top:1371px;width:1px;height:45px;background:#ddd"></div>
<div class="a td" style="right:17px;top:1382px;font-size:14px">1</div>
<div class="a" style="left:1828px;top:1376px;width:40px;height:34px;border:1px solid #ccc;border-radius:4px;background:#fff;display:flex;align-items:center;justify-content:center"><svg width="16" height="15" viewBox="0 0 16 15" style="margin-top:-2px"><path d="M7 2.5H2.2a1 1 0 0 0-1 1V13a1 1 0 0 0 1 1h9.6a1 1 0 0 0 1-1V8.2" fill="none" stroke="#555" stroke-width="1.1"/><path d="M5.5 10L14.5 1M10.5 1h4v4" fill="none" stroke="#555" stroke-width="1.1"/></svg></div>
<div class="a td" style="right:178px;top:1376px">72</div>
<div class="a" style="left:1256px;top:1377px"><svg width="20" height="24" viewBox="0 0 20 24"><rect x="1" y="3.5" width="18" height="19.5" rx="1.5" fill="none" stroke="#8a6d3b" stroke-width="1.6"/><circle cx="10" cy="3" r="1.8" fill="none" stroke="#8a6d3b" stroke-width="1.4"/><rect x="5.5" y="4" width="9" height="2.2" fill="#8a6d3b"/><path d="M5 10.5l1.5 1.5 2.5-3M10 12h5M5 15.5h1.5M10 15.5h5" fill="none" stroke="#8a6d3b" stroke-width="1.4"/></svg></div>
<div class="a td" style="right:643px;top:1386px;font-size:12px;letter-spacing:0">מתוכנן</div>
<div class="a td" style="right:1346px;top:1377px">שחר אדמין גבאי</div>
<div class="a" style="left:272px;top:1376px;width:33px;height:30px;border:1px solid #ccc;border-radius:3px;background:#fff;display:flex;align-items:center;justify-content:center"><svg width="21" height="24" viewBox="0 0 448 512" preserveAspectRatio="none" style=""><path d="M148 288h-40c-6.6 0-12-5.4-12-12v-40c0-6.6 5.4-12 12-12h40c6.6 0 12 5.4 12 12v40c0 6.6-5.4 12-12 12zm108-12v-40c0-6.6-5.4-12-12-12h-40c-6.6 0-12 5.4-12 12v40c0 6.6 5.4 12 12 12h40c6.6 0 12-5.4 12-12zm96 0v-40c0-6.6-5.4-12-12-12h-40c-6.6 0-12 5.4-12 12v40c0 6.6 5.4 12 12 12h40c6.6 0 12-5.4 12-12zm-96 96v-40c0-6.6-5.4-12-12-12h-40c-6.6 0-12 5.4-12 12v40c0 6.6 5.4 12 12 12h40c6.6 0 12-5.4 12-12zm-96 0v-40c0-6.6-5.4-12-12-12h-40c-6.6 0-12 5.4-12 12v40c0 6.6 5.4 12 12 12h40c6.6 0 12-5.4 12-12zm192 0v-40c0-6.6-5.4-12-12-12h-40c-6.6 0-12 5.4-12 12v40c0 6.6 5.4 12 12 12h40c6.6 0 12-5.4 12-12zm96-260v352c0 26.5-21.5 48-48 48H48c-26.5 0-48-21.5-48-48V112c0-26.5 21.5-48 48-48h48V12c0-6.6 5.4-12 12-12h40c6.6 0 12 5.4 12 12v52h128V12c0-6.6 5.4-12 12-12h40c6.6 0 12 5.4 12 12v52h48c26.5 0 48 21.5 48 48zm-48 346V160H48v298c0 3.3 2.7 6 6 6h340c3.3 0 6-2.7 6-6z" fill="#337ab7"/></svg></div>
<div class="a td" style="right:1627px;top:1381px;direction:ltr;letter-spacing:0">14/08/2019</div>
<div class="a" style="left:12px;top:1416px;width:1873px;height:29px;background:#f9f9f9;border:1px solid #ddd;border-top:none"></div>
<div class="a td" style="right:17px;top:1422px;font-size:13px;letter-spacing:-.2px">יולי 2019</div>
<div class="a" style="left:12px;top:1445px;width:1873px;height:45px;background:#fff;border:1px solid #ddd;border-top:none"></div>
<div class="a" style="left:310px;top:1445px;width:1px;height:45px;background:#ddd"></div>
<div class="a" style="left:554px;top:1445px;width:1px;height:45px;background:#ddd"></div>
<div class="a" style="left:1064px;top:1445px;width:1px;height:45px;background:#ddd"></div>
<div class="a" style="left:1282px;top:1445px;width:1px;height:45px;background:#ddd"></div>
<div class="a" style="left:1452px;top:1445px;width:1px;height:45px;background:#ddd"></div>
<div class="a" style="left:1722px;top:1445px;width:1px;height:45px;background:#ddd"></div>
<div class="a td" style="right:17px;top:1456px;font-size:14px">1</div>
<div class="a" style="left:1828px;top:1450px;width:40px;height:34px;border:1px solid #ccc;border-radius:4px;background:#fff;display:flex;align-items:center;justify-content:center"><svg width="16" height="15" viewBox="0 0 16 15" style="margin-top:-2px"><path d="M7 2.5H2.2a1 1 0 0 0-1 1V13a1 1 0 0 0 1 1h9.6a1 1 0 0 0 1-1V8.2" fill="none" stroke="#555" stroke-width="1.1"/><path d="M5.5 10L14.5 1M10.5 1h4v4" fill="none" stroke="#555" stroke-width="1.1"/></svg></div>
<div class="a td" style="right:178px;top:1450px">בחירת ריצוף</div>
<div class="a" style="left:1393px;top:1450px"><div style="width:54px;height:30px;border:1px solid #ccc;border-radius:3px;background:#fff;display:flex;align-items:center;justify-content:center;direction:ltr;letter-spacing:0"><svg width="26" height="22" viewBox="0 0 26 22"><path d="M0.8 2.4l2 2L6.5 0.4M0.8 8.7l2 2L6.5 6.7" fill="none" stroke="#222" stroke-width="1.4"/><circle cx="3" cy="17.5" r="1.9" fill="#222"/><path d="M9 3.5h15M9 9.8h15M9 17.5h15" stroke="#222" stroke-width="3"/></svg><span style="font-family:'Liberation Serif';font-weight:bold;font-size:25px;line-height:24px;margin-left:3px;color:#222">2</span></div></div>
<div class="a" style="left:1246px;top:1450px"><svg width="32" height="26" viewBox="0 0 32 26"><path d="M3.2 22.8L17.5 10.8" stroke="#3c763d" stroke-width="4.6" stroke-linecap="round"/><path d="M3.2 22.8L17.5 10.8" stroke="#fff" stroke-width="2.4" stroke-linecap="round"/><path d="M12.2 2.4C15 1 20 .6 22.6 3.2L25.4 6.1V8.7L30.6 10.3L24.2 16.4L24.9 14.6L21.7 11.4H19.1L15.9 8.7V6.1Z" fill="#fff" stroke="#3c763d" stroke-width="1.2" stroke-linejoin="round"/></svg></div>
<div class="a td" style="right:650px;top:1461px;font-size:12px;letter-spacing:0">בעבודה</div>
<div class="a td" style="right:836px;top:1451px">שחר אדמין גבאי, אלה גבאי, אבי אבי</div>
<div class="a td" style="right:1346px;top:1451px">שחר אדמין גבאי</div>
<div class="a" style="left:272px;top:1450px;width:33px;height:30px;border:1px solid #ccc;border-radius:3px;background:#fff;display:flex;align-items:center;justify-content:center"><svg width="21" height="24" viewBox="0 0 448 512" preserveAspectRatio="none" style=""><path d="M148 288h-40c-6.6 0-12-5.4-12-12v-40c0-6.6 5.4-12 12-12h40c6.6 0 12 5.4 12 12v40c0 6.6-5.4 12-12 12zm108-12v-40c0-6.6-5.4-12-12-12h-40c-6.6 0-12 5.4-12 12v40c0 6.6 5.4 12 12 12h40c6.6 0 12-5.4 12-12zm96 0v-40c0-6.6-5.4-12-12-12h-40c-6.6 0-12 5.4-12 12v40c0 6.6 5.4 12 12 12h40c6.6 0 12-5.4 12-12zm-96 96v-40c0-6.6-5.4-12-12-12h-40c-6.6 0-12 5.4-12 12v40c0 6.6 5.4 12 12 12h40c6.6 0 12-5.4 12-12zm-96 0v-40c0-6.6-5.4-12-12-12h-40c-6.6 0-12 5.4-12 12v40c0 6.6 5.4 12 12 12h40c6.6 0 12-5.4 12-12zm192 0v-40c0-6.6-5.4-12-12-12h-40c-6.6 0-12 5.4-12 12v40c0 6.6 5.4 12 12 12h40c6.6 0 12-5.4 12-12zm96-260v352c0 26.5-21.5 48-48 48H48c-26.5 0-48-21.5-48-48V112c0-26.5 21.5-48 48-48h48V12c0-6.6 5.4-12 12-12h40c6.6 0 12 5.4 12 12v52h128V12c0-6.6 5.4-12 12-12h40c6.6 0 12 5.4 12 12v52h48c26.5 0 48 21.5 48 48zm-48 346V160H48v298c0 3.3 2.7 6 6 6h340c3.3 0 6-2.7 6-6z" fill="#337ab7"/></svg></div>
<div class="a td" style="right:1627px;top:1455px;direction:ltr;letter-spacing:0">03/07/2019</div>
<div class="a" style="left:12px;top:1490px;width:1873px;height:29px;background:#f9f9f9;border:1px solid #ddd;border-top:none"></div>
<div class="a td" style="right:17px;top:1496px;font-size:13px;letter-spacing:-.2px">יוני 2019</div>
<div class="a" style="left:12px;top:1519px;width:1873px;height:45px;background:#fcf8e3;border:1px solid #ddd;border-top:none"></div>
<div class="a" style="left:310px;top:1519px;width:1px;height:45px;background:#ddd"></div>
<div class="a" style="left:554px;top:1519px;width:1px;height:45px;background:#ddd"></div>
<div class="a" style="left:1064px;top:1519px;width:1px;height:45px;background:#ddd"></div>
<div class="a" style="left:1282px;top:1519px;width:1px;height:45px;background:#ddd"></div>
<div class="a" style="left:1452px;top:1519px;width:1px;height:45px;background:#ddd"></div>
<div class="a" style="left:1722px;top:1519px;width:1px;height:45px;background:#ddd"></div>
<div class="a td" style="right:17px;top:1530px;font-size:14px">1</div>
<div class="a" style="left:1828px;top:1524px;width:40px;height:34px;border:1px solid #ccc;border-radius:4px;background:#fff;display:flex;align-items:center;justify-content:center"><svg width="16" height="15" viewBox="0 0 16 15" style="margin-top:-2px"><path d="M7 2.5H2.2a1 1 0 0 0-1 1V13a1 1 0 0 0 1 1h9.6a1 1 0 0 0 1-1V8.2" fill="none" stroke="#555" stroke-width="1.1"/><path d="M5.5 10L14.5 1M10.5 1h4v4" fill="none" stroke="#555" stroke-width="1.1"/></svg></div>
<div class="a td" style="right:178px;top:1524px">חדש</div>
<div class="a" style="left:1256px;top:1525px"><svg width="20" height="24" viewBox="0 0 20 24"><rect x="1" y="3.5" width="18" height="19.5" rx="1.5" fill="none" stroke="#8a6d3b" stroke-width="1.6"/><circle cx="10" cy="3" r="1.8" fill="none" stroke="#8a6d3b" stroke-width="1.4"/><rect x="5.5" y="4" width="9" height="2.2" fill="#8a6d3b"/><path d="M5 10.5l1.5 1.5 2.5-3M10 12h5M5 15.5h1.5M10 15.5h5" fill="none" stroke="#8a6d3b" stroke-width="1.4"/></svg></div>
<div class="a td" style="right:643px;top:1534px;font-size:12px;letter-spacing:0">מתוכנן</div>
<div class="a td" style="right:836px;top:1525px">בני בשן</div>
<div class="a td" style="right:1346px;top:1525px">שחר אדמין גבאי</div>
<div class="a" style="left:272px;top:1524px;width:33px;height:30px;border:1px solid #ccc;border-radius:3px;background:#fff;display:flex;align-items:center;justify-content:center"><svg width="21" height="24" viewBox="0 0 448 512" preserveAspectRatio="none" style=""><path d="M148 288h-40c-6.6 0-12-5.4-12-12v-40c0-6.6 5.4-12 12-12h40c6.6 0 12 5.4 12 12v40c0 6.6-5.4 12-12 12zm108-12v-40c0-6.6-5.4-12-12-12h-40c-6.6 0-12 5.4-12 12v40c0 6.6 5.4 12 12 12h40c6.6 0 12-5.4 12-12zm96 0v-40c0-6.6-5.4-12-12-12h-40c-6.6 0-12 5.4-12 12v40c0 6.6 5.4 12 12 12h40c6.6 0 12-5.4 12-12zm-96 96v-40c0-6.6-5.4-12-12-12h-40c-6.6 0-12 5.4-12 12v40c0 6.6 5.4 12 12 12h40c6.6 0 12-5.4 12-12zm-96 0v-40c0-6.6-5.4-12-12-12h-40c-6.6 0-12 5.4-12 12v40c0 6.6 5.4 12 12 12h40c6.6 0 12-5.4 12-12zm192 0v-40c0-6.6-5.4-12-12-12h-40c-6.6 0-12 5.4-12 12v40c0 6.6 5.4 12 12 12h40c6.6 0 12-5.4 12-12zm96-260v352c0 26.5-21.5 48-48 48H48c-26.5 0-48-21.5-48-48V112c0-26.5 21.5-48 48-48h48V12c0-6.6 5.4-12 12-12h40c6.6 0 12 5.4 12 12v52h128V12c0-6.6 5.4-12 12-12h40c6.6 0 12 5.4 12 12v52h48c26.5 0 48 21.5 48 48zm-48 346V160H48v298c0 3.3 2.7 6 6 6h340c3.3 0 6-2.7 6-6z" fill="#337ab7"/></svg></div>
<div class="a td" style="right:1627px;top:1529px;direction:ltr;letter-spacing:0">28/06/2019</div>
<div class="a" style="left:12px;top:1564px;width:1873px;height:45px;background:#f9f9f9;border:1px solid #ddd;border-top:none"></div>
<div class="a" style="left:310px;top:1564px;width:1px;height:45px;background:#ddd"></div>
<div class="a" style="left:554px;top:1564px;width:1px;height:45px;background:#ddd"></div>
<div class="a" style="left:1064px;top:1564px;width:1px;height:45px;background:#ddd"></div>
<div class="a" style="left:1282px;top:1564px;width:1px;height:45px;background:#ddd"></div>
<div class="a" style="left:1452px;top:1564px;width:1px;height:45px;background:#ddd"></div>
<div class="a" style="left:1722px;top:1564px;width:1px;height:45px;background:#ddd"></div>
<div class="a td" style="right:17px;top:1575px;font-size:14px">2</div>
<div class="a" style="left:1828px;top:1569px;width:40px;height:34px;border:1px solid #ccc;border-radius:4px;background:#fff;display:flex;align-items:center;justify-content:center"><svg width="16" height="15" viewBox="0 0 16 15" style="margin-top:-2px"><path d="M7 2.5H2.2a1 1 0 0 0-1 1V13a1 1 0 0 0 1 1h9.6a1 1 0 0 0 1-1V8.2" fill="none" stroke="#555" stroke-width="1.1"/><path d="M5.5 10L14.5 1M10.5 1h4v4" fill="none" stroke="#555" stroke-width="1.1"/></svg></div>
<div class="a td" style="right:178px;top:1569px">בחירת שם פרויקט</div>
<div class="a" style="left:1393px;top:1569px"><div style="width:54px;height:30px;border:1px solid #ccc;border-radius:3px;background:#fff;display:flex;align-items:center;justify-content:center;direction:ltr;letter-spacing:0"><svg width="26" height="22" viewBox="0 0 26 22"><path d="M0.8 2.4l2 2L6.5 0.4M0.8 8.7l2 2L6.5 6.7" fill="none" stroke="#222" stroke-width="1.4"/><circle cx="3" cy="17.5" r="1.9" fill="#222"/><path d="M9 3.5h15M9 9.8h15M9 17.5h15" stroke="#222" stroke-width="3"/></svg><span style="font-family:'Liberation Serif';font-weight:bold;font-size:25px;line-height:24px;margin-left:3px;color:#222">2</span></div></div>
<div class="a" style="left:1246px;top:1569px"><svg width="32" height="26" viewBox="0 0 32 26"><path d="M3.2 22.8L17.5 10.8" stroke="#3c763d" stroke-width="4.6" stroke-linecap="round"/><path d="M3.2 22.8L17.5 10.8" stroke="#fff" stroke-width="2.4" stroke-linecap="round"/><path d="M12.2 2.4C15 1 20 .6 22.6 3.2L25.4 6.1V8.7L30.6 10.3L24.2 16.4L24.9 14.6L21.7 11.4H19.1L15.9 8.7V6.1Z" fill="#fff" stroke="#3c763d" stroke-width="1.2" stroke-linejoin="round"/></svg></div>
<div class="a td" style="right:650px;top:1580px;font-size:12px;letter-spacing:0">בעבודה</div>
<div class="a td" style="right:836px;top:1570px">שחר אדמין גבאי, אלה גבאי</div>
<div class="a td" style="right:1346px;top:1570px">שחר אדמין גבאי</div>
<div class="a" style="left:272px;top:1569px;width:33px;height:30px;border:1px solid #ccc;border-radius:3px;background:#fff;display:flex;align-items:center;justify-content:center"><svg width="21" height="24" viewBox="0 0 448 512" preserveAspectRatio="none" style=""><path d="M148 288h-40c-6.6 0-12-5.4-12-12v-40c0-6.6 5.4-12 12-12h40c6.6 0 12 5.4 12 12v40c0 6.6-5.4 12-12 12zm108-12v-40c0-6.6-5.4-12-12-12h-40c-6.6 0-12 5.4-12 12v40c0 6.6 5.4 12 12 12h40c6.6 0 12-5.4 12-12zm96 0v-40c0-6.6-5.4-12-12-12h-40c-6.6 0-12 5.4-12 12v40c0 6.6 5.4 12 12 12h40c6.6 0 12-5.4 12-12zm-96 96v-40c0-6.6-5.4-12-12-12h-40c-6.6 0-12 5.4-12 12v40c0 6.6 5.4 12 12 12h40c6.6 0 12-5.4 12-12zm-96 0v-40c0-6.6-5.4-12-12-12h-40c-6.6 0-12 5.4-12 12v40c0 6.6 5.4 12 12 12h40c6.6 0 12-5.4 12-12zm192 0v-40c0-6.6-5.4-12-12-12h-40c-6.6 0-12 5.4-12 12v40c0 6.6 5.4 12 12 12h40c6.6 0 12-5.4 12-12zm96-260v352c0 26.5-21.5 48-48 48H48c-26.5 0-48-21.5-48-48V112c0-26.5 21.5-48 48-48h48V12c0-6.6 5.4-12 12-12h40c6.6 0 12 5.4 12 12v52h128V12c0-6.6 5.4-12 12-12h40c6.6 0 12 5.4 12 12v52h48c26.5 0 48 21.5 48 48zm-48 346V160H48v298c0 3.3 2.7 6 6 6h340c3.3 0 6-2.7 6-6z" fill="#337ab7"/></svg></div>
<div class="a td" style="right:1627px;top:1574px;direction:ltr;letter-spacing:0">25/06/2016</div>

</body>
</html>
